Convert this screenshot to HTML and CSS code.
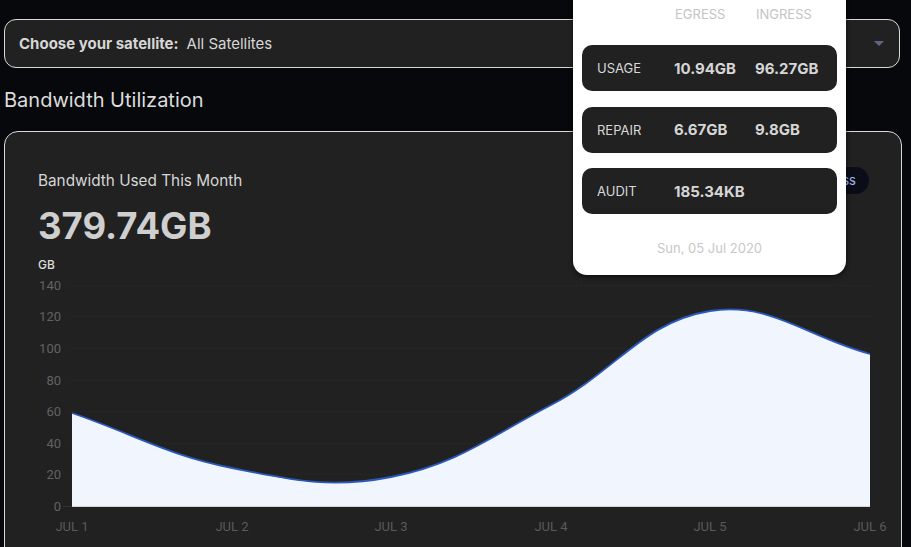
FILE: index.html
```html
<!DOCTYPE html>
<html lang="en">
<head>
  <meta charset="UTF-8">
  <meta name="viewport" content="width=device-width, initial-scale=1.0">
  <link rel="stylesheet" href="styles.css">
</head>
<body>

  <div class="page">
    <div class="select">
      <span class="select-label">Choose your satellite:</span>
      <span class="select-value">All Satellites</span>
      <span class="select-arrow"></span>
    </div>

    <h2 class="section-title">Bandwidth Utilization</h2>

    <div class="card">
      <div class="card-head">
        <div class="card-title">Bandwidth Used This Month</div>
        <div class="toggle">Ingress</div>
      </div>
      <div class="total">379.74GB</div>
      <div class="unit">GB</div>

      <svg class="chart" width="831" height="272" viewBox="38 275 831 272">
        <!-- grid -->
        <g class="grid">
          <line x1="68" y1="285.5" x2="870" y2="285.5"/>
          <line x1="68" y1="316.5" x2="870" y2="316.5"/>
          <line x1="68" y1="348.5" x2="870" y2="348.5"/>
          <line x1="68" y1="380.5" x2="870" y2="380.5"/>
          <line x1="68" y1="411.5" x2="870" y2="411.5"/>
          <line x1="68" y1="443.5" x2="870" y2="443.5"/>
          <line x1="68" y1="474.5" x2="870" y2="474.5"/>
        </g>
        <line class="tick" x1="63" y1="506.5" x2="72" y2="506.5"/>

        <g class="y-labels">
          <text x="61" y="290">140</text>
          <text x="61" y="321">120</text>
          <text x="61" y="353">100</text>
          <text x="61" y="385">80</text>
          <text x="61" y="416">60</text>
          <text x="61" y="448">40</text>
          <text x="61" y="479">20</text>
          <text x="61" y="511">0</text>
        </g>

        <path class="area" d="M72,413 C136,435 166.3,454.8 232,468 C293.9,480.4 330.4,489 391,477 C458,463.8 488.8,437.4 551,405 C616.4,371 642.7,321.8 710,311 C770.3,301.4 806,336.8 870,354 L870,506 L72,506 Z"/>
        <path class="line" d="M72,413 C136,435 166.3,454.8 232,468 C293.9,480.4 330.4,489 391,477 C458,463.8 488.8,437.4 551,405 C616.4,371 642.7,321.8 710,311 C770.3,301.4 806,336.8 870,354"/>
        <line class="axis" x1="72" y1="506.5" x2="870" y2="506.5"/>

        <g class="x-labels">
          <text x="72" y="531">JUL 1</text>
          <text x="232" y="531">JUL 2</text>
          <text x="391" y="531">JUL 3</text>
          <text x="551" y="531">JUL 4</text>
          <text x="710" y="531">JUL 5</text>
          <text x="870" y="531">JUL 6</text>
        </g>
      </svg>
    </div>
  </div>

  <div class="tooltip">
    <div class="tip-head">
      <span></span>
      <span>EGRESS</span>
      <span>INGRESS</span>
    </div>
    <div class="tip-row">
      <span class="tip-label">USAGE</span>
      <span class="tip-value">10.94GB</span>
      <span class="tip-value">96.27GB</span>
    </div>
    <div class="tip-row">
      <span class="tip-label">REPAIR</span>
      <span class="tip-value">6.67GB</span>
      <span class="tip-value">9.8GB</span>
    </div>
    <div class="tip-row">
      <span class="tip-label">AUDIT</span>
      <span class="tip-value">185.34KB</span>
      <span class="tip-value"></span>
    </div>
    <div class="tip-date">Sun, 05 Jul 2020</div>
  </div>

</body>
</html>
```

FILE: styles.css
```css
* {
  margin: 0;
  padding: 0;
  box-sizing: border-box;
}

body {
  font-family: 'Inter', 'Noto Sans', sans-serif;
  background-color: #07080c;
  color: #dcdcdc;
  overflow: hidden;
}

.page {
  padding: 19px 9px 0 4px;
}

/* satellite select */
.select {
  display: flex;
  align-items: center;
  height: 49px;
  margin-right: 2px;
  padding: 0 14px;
  background-color: #212121;
  border: 1px solid #d9d9d9;
  border-radius: 12px;
  font-size: 15px;
}

.select-label {
  font-weight: 700;
  color: #d6d6d6;
  margin-right: 8px;
}

.select-value {
  color: #d6d6d6;
  flex: 1;
}

.select-arrow {
  width: 0;
  height: 0;
  border-left: 5px solid transparent;
  border-right: 5px solid transparent;
  border-top: 5px solid #5b6784;
  margin-right: 1px;
}

.section-title {
  font-size: 20px;
  font-weight: 400;
  line-height: 24px;
  color: #dcdcdc;
  margin: 20px 0 19px;
}

/* card */
.card {
  background-color: #212121;
  border: 1px solid #d9d9d9;
  border-radius: 14px;
  padding: 35px 32px 40px 33px;
  height: 460px;
}

.card-head {
  display: flex;
  justify-content: space-between;
  align-items: center;
}

.card-title {
  font-size: 15.3px;
  line-height: 20px;
  color: #d6d6d6;
}

.toggle {
  background-color: #0a0d17;
  color: #a3bcf0;
  font-size: 13px;
  border-radius: 14px;
  height: 27px;
  line-height: 27px;
  padding: 0 13px 0 20px;
}

.total {
  font-size: 36.5px;
  font-weight: 700;
  line-height: 44px;
  margin-top: 10px;
  color: #cfcfcf;
}

.unit {
  font-size: 12px;
  font-weight: 500;
  line-height: 16px;
  margin-top: 9px;
  color: #dcdcdc;
}

.chart {
  display: block;
  overflow: visible;
  margin-top: 2px;
}

.grid line {
  stroke: #282828;
  stroke-width: 1;
  stroke-dasharray: 2 2;
}

.tick {
  stroke: #333;
  stroke-width: 1;
}

.axis {
  stroke: #d4d4d4;
  stroke-width: 1;
}

.y-labels text {
  font-family: 'Roboto', sans-serif;
  font-size: 13px;
  fill: #626262;
  text-anchor: end;
}

.x-labels text {
  font-family: 'Roboto', sans-serif;
  font-size: 13px;
  fill: #5a5a5a;
  text-anchor: middle;
}

.area {
  fill: #f1f5fe;
}

.line {
  fill: none;
  stroke: #2a58bb;
  stroke-width: 1.8;
}

/* tooltip */
.tooltip {
  position: absolute;
  left: 573px;
  top: -14px;
  width: 273px;
  padding: 20px 9px 19px;
  background-color: #fff;
  border-radius: 14px;
  box-shadow: 0 2px 5px rgba(0, 0, 0, 0.6);
}

.tip-head,
.tip-row {
  display: grid;
  grid-template-columns: 77px 81px 1fr;
}

.tip-head {
  font-size: 13px;
  line-height: 16px;
  color: #c4c4c4;
  padding-left: 15px;
  margin-bottom: 23px;
}

.tip-head span {
  padding-left: 1px;
}

.tip-row {
  align-items: center;
  height: 46px;
  padding-left: 15px;
  margin-bottom: 15.5px;
  background-color: #212121;
  border-radius: 10px;
}

.tip-label {
  font-size: 13px;
  color: #d8d8d8;
}

.tip-value {
  font-size: 15px;
  font-weight: 700;
  color: #d6d6d6;
}

.tip-date {
  text-align: center;
  font-size: 13px;
  line-height: 16px;
  color: #c8c8c8;
  margin-top: 26px;
}
```
